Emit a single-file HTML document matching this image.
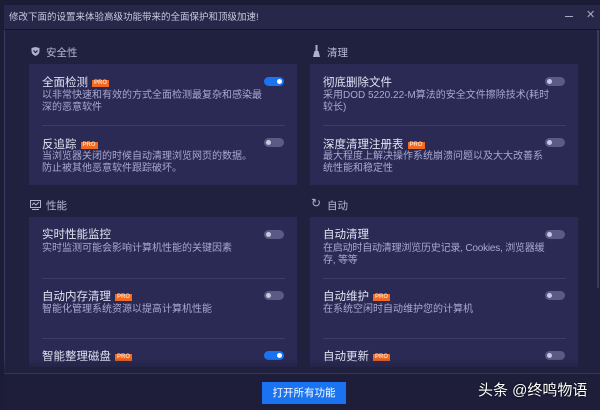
<!DOCTYPE html>
<html><head><meta charset="utf-8"><style>
*{margin:0;padding:0;box-sizing:border-box}
body{width:600px;height:410px;overflow:hidden;background:#1c1c36;font-family:"Liberation Sans","Noto Sans CJK SC",sans-serif;position:relative}
.a{position:absolute}
.win{left:4px;top:5px;width:596px;height:405px;background:#20203f;border-left:1px solid #3a3a60}
.titlebar{left:4px;top:5px;width:596px;height:25px;background:#272849;border-bottom:1px solid #15152a;color:#c8c8e0;font-size:9.5px;line-height:25px;padding-left:5px}
.sec{color:#b8b8d4;font-size:10.5px}
.card{background:#2a2a55}
.t{color:#e2e2f2;font-size:11.5px;white-space:nowrap}
.d{color:#a8a8d0;font-size:10px;line-height:12px}
.pro{display:inline-block;background:#f26a22;color:#ffd9c0;font-size:6px;line-height:7px;padding:0 2px;vertical-align:2px;margin-left:4px;font-weight:bold}
.tg{width:20px;height:9px;border-radius:5px;background:#5a5a86}
.tg::after{content:"";position:absolute;left:2px;top:2px;width:5px;height:5px;border-radius:50%;background:#c8c8e0}
.on{background:#1a73f0}
.on::after{left:13px;background:#fff}
.sep{height:1px;background:#3d3d68}
</style></head><body>
<div class="a win"></div>
<div class="a titlebar">修改下面的设置来体验高级功能带来的全面保护和顶级加速!</div>
<div class="a" style="left:565px;top:16px;width:8px;height:1px;background:#aab"></div>
<div class="a" style="left:586px;top:8px;color:#aab;font-size:11px">✕</div>
<div class="a" style="left:597px;top:30px;width:2px;height:258px;background:#3a3a5c"></div>

<svg class="a" style="left:31px;top:47px" width="9" height="9" viewBox="0 0 9 9"><path d="M0.5 1 L4.5 0 L8.5 1 L8.5 4 Q8.5 7.5 4.5 9 Q0.5 7.5 0.5 4Z" fill="#b0b0cc"/><path d="M2.5 3.5 L4.5 5.5 L6.5 3.5" stroke="#20203f" stroke-width="1.2" fill="none"/></svg>
<div class="a sec" style="left:46px;top:45px">安全性</div>
<div class="a card" style="left:29px;top:64px;width:268px;height:121px"></div>
<div class="a t" style="left:42px;top:74px">全面检测<span class="pro">PRO</span></div>
<div class="a tg on" style="left:264px;top:77px"></div>
<div class="a d" style="left:42px;top:90px;width:228px">以非常快速和有效的方式全面检测最复杂和感染最深的恶意软件</div>
<div class="a sep" style="left:42px;top:125px;width:243px"></div>
<div class="a t" style="left:42px;top:136px">反追踪<span class="pro">PRO</span></div>
<div class="a tg" style="left:264px;top:138px"></div>
<div class="a d" style="left:42px;top:151px;width:235px">当浏览器关闭的时候自动清理浏览网页的数据。<br>防止被其他恶意软件跟踪破坏。</div>

<svg class="a" style="left:312px;top:45px" width="9" height="12" viewBox="0 0 9 12"><rect x="3.5" y="0" width="2" height="6" fill="#b0b0cc"/><path d="M1 12 L2.5 6 L6.5 6 L8 12Z" fill="#b0b0cc"/></svg>
<div class="a sec" style="left:327px;top:45px">清理</div>
<div class="a card" style="left:310px;top:64px;width:268px;height:121px"></div>
<div class="a t" style="left:323px;top:74px">彻底删除文件</div>
<div class="a tg" style="left:545px;top:77px"></div>
<div class="a d" style="left:323px;top:90px;width:228px">采用DOD 5220.22-M算法的安全文件擦除技术(耗时较长)</div>
<div class="a sep" style="left:323px;top:125px;width:243px"></div>
<div class="a t" style="left:323px;top:136px">深度清理注册表<span class="pro">PRO</span></div>
<div class="a tg" style="left:545px;top:138px"></div>
<div class="a d" style="left:323px;top:151px;width:228px">最大程度上解决操作系统崩溃问题以及大大改善系统性能和稳定性</div>

<svg class="a" style="left:30px;top:200px" width="11" height="10" viewBox="0 0 11 10"><rect x="0.5" y="0.5" width="10" height="7" fill="none" stroke="#b0b0cc"/><path d="M2 5 L4 3 L6 5 L9 2" stroke="#b0b0cc" fill="none"/><rect x="2" y="9" width="7" height="1" fill="#b0b0cc"/></svg>
<div class="a sec" style="left:46px;top:198px">性能</div>
<div class="a card" style="left:29px;top:217px;width:268px;height:150px"></div>
<div class="a t" style="left:42px;top:226px">实时性能监控</div>
<div class="a tg" style="left:264px;top:230px"></div>
<div class="a d" style="left:42px;top:243px;width:230px">实时监测可能会影响计算机性能的关键因素</div>
<div class="a sep" style="left:42px;top:278px;width:243px"></div>
<div class="a t" style="left:42px;top:288px">自动内存清理<span class="pro">PRO</span></div>
<div class="a tg" style="left:264px;top:291px"></div>
<div class="a d" style="left:42px;top:304px;width:230px">智能化管理系统资源以提高计算机性能</div>
<div class="a sep" style="left:42px;top:338px;width:243px"></div>
<div class="a t" style="left:42px;top:348px">智能整理磁盘<span class="pro">PRO</span></div>
<div class="a tg on" style="left:264px;top:351px"></div>

<div class="a" style="left:311px;top:196px;color:#b0b0cc;font-size:12px">↻</div>
<div class="a sec" style="left:327px;top:198px">自动</div>
<div class="a card" style="left:310px;top:217px;width:268px;height:150px"></div>
<div class="a t" style="left:323px;top:226px">自动清理</div>
<div class="a tg" style="left:545px;top:230px"></div>
<div class="a d" style="left:323px;top:243px;width:228px;letter-spacing:-0.2px">在启动时自动清理浏览历史记录, Cookies, 浏览器缓<br>存, 等等</div>
<div class="a sep" style="left:323px;top:278px;width:243px"></div>
<div class="a t" style="left:323px;top:288px">自动维护<span class="pro">PRO</span></div>
<div class="a tg" style="left:545px;top:291px"></div>
<div class="a d" style="left:323px;top:304px;width:230px">在系统空闲时自动维护您的计算机</div>
<div class="a sep" style="left:323px;top:338px;width:243px"></div>
<div class="a t" style="left:323px;top:348px">自动更新<span class="pro">PRO</span></div>
<div class="a tg" style="left:545px;top:351px"></div>

<div class="a" style="left:4px;top:358px;width:593px;height:15px;background:linear-gradient(rgba(32,32,63,0),#20203f)"></div>
<div class="a" style="left:4px;top:373px;width:596px;height:37px;background:#1e1e3b;border-top:1px solid #34345a"></div>
<div class="a" style="left:262px;top:382px;width:84px;height:22px;background:#1a73f0;color:#fff;font-size:10.5px;line-height:22px;text-align:center">打开所有功能</div>
<div class="a" style="left:478px;top:379px;color:#fff;font-size:15px;text-shadow:0 0 2px #000">头条 @终鸣物语</div>
</body></html>
